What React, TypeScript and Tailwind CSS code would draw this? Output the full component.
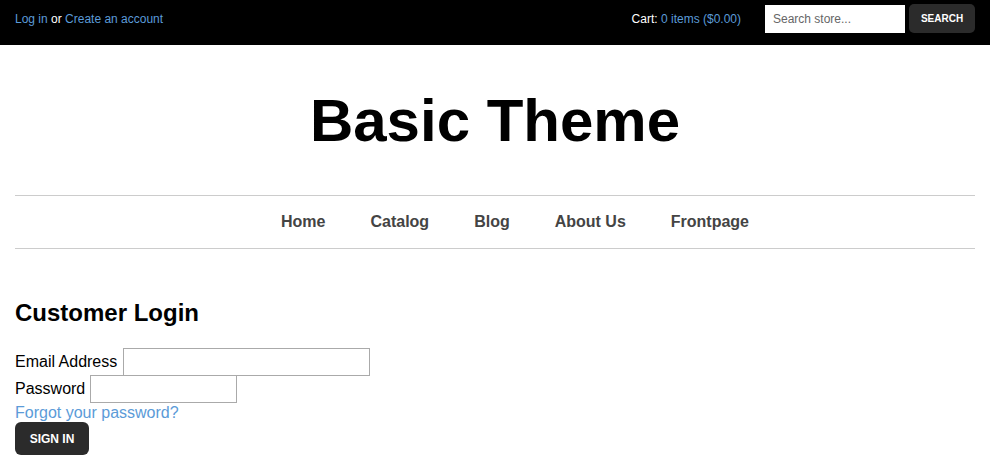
import React from "react";

export default function App() {
  return (
    <div className="min-h-[461px] bg-white text-black" style={{ fontFamily: '"Liberation Sans", Arial, Helvetica, sans-serif' }}>
      <div className="h-[45px] bg-black flex items-center justify-between px-[15px] pb-[8px]">
        <div className="text-[12px] text-white">
          <a className="text-[#5b9bd8]">Log in</a> or <a className="text-[#5b9bd8]">Create an account</a>
        </div>
        <div className="flex items-center">
          <div className="text-[12px] text-white mr-[24px]">
            Cart: <a className="text-[#5b9bd8]">0 items ($0.00)</a>
          </div>
          <input
            className="w-[140px] h-[28px] bg-white text-[12px] px-[8px] outline-none placeholder:text-[#666]"
            placeholder="Search store..."
          />
          <button className="ml-[4px] w-[66px] h-[29px] rounded-[5px] bg-[#2b2b2b] text-white text-[10px] font-bold">
            SEARCH
          </button>
        </div>
      </div>

      <div className="px-[15px]">
        <div className="h-[150px] flex items-center justify-center">
          <h1 className="text-[60px] font-bold leading-none mt-[2px]">Basic Theme</h1>
        </div>
        <nav className="h-[54px] border-y border-[#cccccc] flex items-center justify-center gap-[45px] pl-[40px] text-[16px] font-bold text-[#444]">
          <a>Home</a>
          <a>Catalog</a>
          <a>Blog</a>
          <a>About Us</a>
          <a>Frontpage</a>
        </nav>

        <h2 className="mt-[49px] text-[24px] font-bold leading-[30px]">Customer Login</h2>
        <div className="mt-[20px] text-[16px] leading-[20px]">
          <div className="flex items-center h-[27px]">
            <span>Email Address</span>
            <input className="ml-[6px] w-[247px] h-[28px] border border-[#aaa] outline-none" />
          </div>
          <div className="flex items-center h-[28px]">
            <span>Password</span>
            <input className="ml-[5px] w-[147px] h-[28px] border border-[#aaa] outline-none" />
          </div>
          <a className="block text-[#5b9bd8] h-[19px] leading-[19px]">Forgot your password?</a>
          <button className="mt-[0px] w-[74px] h-[33px] rounded-[6px] bg-[#2b2b2b] text-white text-[12px] font-bold">
            SIGN IN
          </button>
        </div>
      </div>
    </div>
  );
}
